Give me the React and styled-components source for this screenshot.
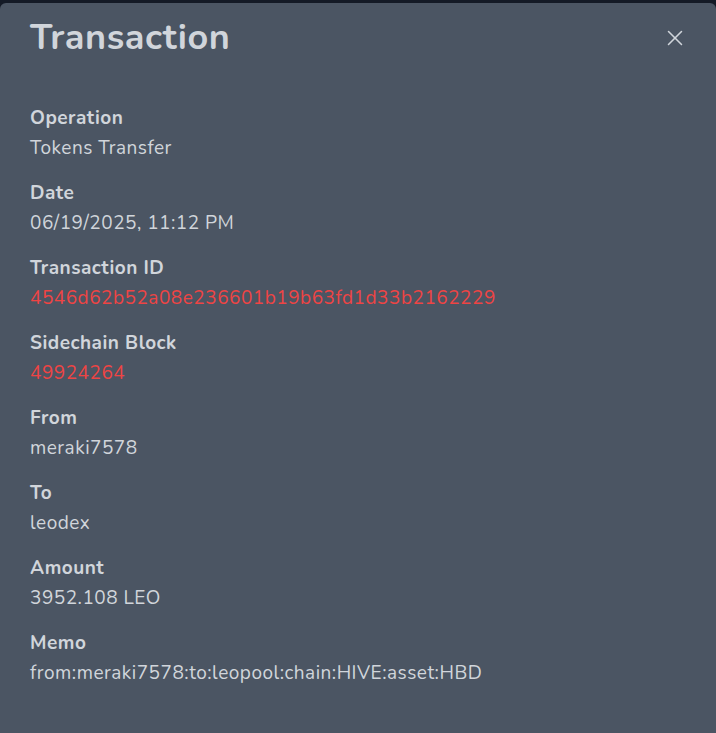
import React from 'react';
import styled, { createGlobalStyle } from 'styled-components';
import { X } from 'lucide-react';

const GlobalStyle = createGlobalStyle`
  html, body {
    margin: 0;
    padding: 0;
    background: #141a26;
  }
  body {
    font-family: "Nunito", "Open Sans", "Noto Sans", sans-serif;
  }
`;

const Backdrop = styled.div`
  padding-top: 3px;
  height: 730px;
  overflow: hidden;
`;

const Modal = styled.div`
  background: #4b5563;
  border-radius: 6px;
  min-height: 740px;
  color: #d1d5db;
`;

const Header = styled.div`
  display: flex;
  align-items: flex-start;
  justify-content: space-between;
  padding: 13px 28px 0 30px;
`;

const Title = styled.h1`
  margin: 0;
  font-size: 36px;
  font-weight: 700;
  line-height: 43px;
  letter-spacing: 0.6px;
  color: #d1d5db;
`;

const CloseButton = styled.button`
  background: none;
  border: none;
  padding: 0;
  margin-top: 9px;
  color: #d1d5db;
  cursor: pointer;
  display: flex;
`;

const Body = styled.div`
  display: flex;
  flex-direction: column;
  gap: 15px;
  padding: 44px 30px 0 30px;
`;

const Field = styled.div`
  display: flex;
  flex-direction: column;
`;

const Label = styled.div`
  font-size: 19px;
  font-weight: 700;
  line-height: 30px;
  letter-spacing: 0.5px;
`;

const Value = styled.div`
  font-size: 19px;
  line-height: 30px;
  letter-spacing: 0.5px;
  color: ${p => (p.$link ? '#ef4444' : '#d1d5db')};
`;

const fields = [
  { label: 'Operation', value: 'Tokens Transfer' },
  { label: 'Date', value: '06/19/2025, 11:12 PM' },
  { label: 'Transaction ID', value: '4546d62b52a08e236601b19b63fd1d33b2162229', link: true },
  { label: 'Sidechain Block', value: '49924264', link: true },
  { label: 'From', value: 'meraki7578' },
  { label: 'To', value: 'leodex' },
  { label: 'Amount', value: '3952.108 LEO' },
  { label: 'Memo', value: 'from:meraki7578:to:leopool:chain:HIVE:asset:HBD' },
];

const App = () => (
  <>
    <GlobalStyle />
    <Backdrop>
      <Modal>
        <Header>
          <Title>Transaction</Title>
          <CloseButton aria-label="Close">
            <X size={26} strokeWidth={1.4} />
          </CloseButton>
        </Header>
        <Body>
          {fields.map(f => (
            <Field key={f.label}>
              <Label>{f.label}</Label>
              <Value $link={f.link}>{f.value}</Value>
            </Field>
          ))}
        </Body>
      </Modal>
    </Backdrop>
  </>
);

export default App;
